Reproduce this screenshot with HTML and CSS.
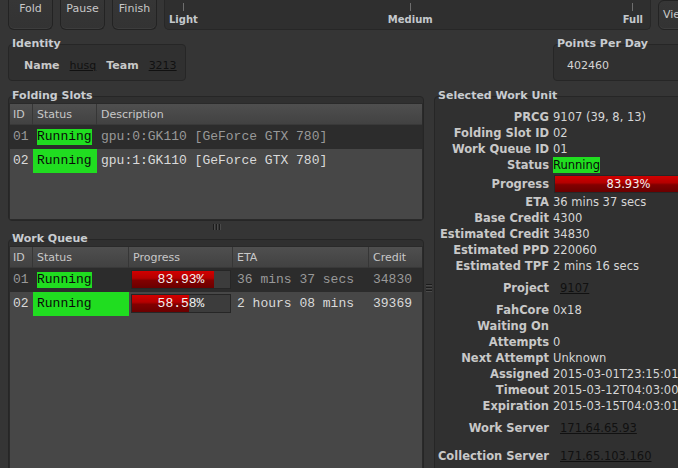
FILE: index.html
```html
<!DOCTYPE html>
<html>
<head>
<meta charset="utf-8">
<title>FAHControl</title>
<link rel="stylesheet" href="styles.css">
</head>
<body>
<div class="app">
  <div class="toolbar">
    <div class="btn">Fold</div>
    <div class="btn">Pause</div>
    <div class="btn">Finish</div>
    <div class="slider">
      <div class="stop"><span class="tick"></span><span class="stop-label">Light</span></div>
      <div class="stop"><span class="tick"></span><span class="stop-label">Medium</span></div>
      <div class="stop"><span class="tick"></span><span class="stop-label">Full</span></div>
    </div>
    <div class="btn view">View</div>
  </div>

  <div class="info-row">
    <div class="group">
      <div class="group-title">Identity</div>
      <div class="group-box identity">
        <span class="key">Name</span><a class="link">husq</a><span class="key">Team</span><a class="link">3213</a>
      </div>
    </div>
    <div class="group ppd">
      <div class="group-title">Points Per Day</div>
      <div class="group-box ppd-box">402460</div>
    </div>
  </div>

  <div class="main">
    <div class="left">
      <div class="group slots">
        <div class="group-title">Folding Slots</div>
        <div class="group-box table-box">
          <div class="table">
            <div class="trow head slots-cols">
              <div class="th id">ID</div><div class="th">Status</div><div class="th">Description</div>
            </div>
            <div class="trow dim slots-cols">
              <div class="td id">01</div><div class="td"><span class="run">Running</span></div><div class="td">gpu:0:GK110 [GeForce GTX 780]</div>
            </div>
            <div class="trow slots-cols">
              <div class="td id">02</div><div class="td run-fill">Running</div><div class="td">gpu:1:GK110 [GeForce GTX 780]</div>
            </div>
          </div>
        </div>
      </div>

      <div class="hsplit"><span></span><span></span><span></span></div>

      <div class="group queue">
        <div class="group-title">Work Queue</div>
        <div class="group-box table-box">
          <div class="table">
            <div class="trow head queue-cols">
              <div class="th id">ID</div><div class="th">Status</div><div class="th">Progress</div><div class="th">ETA</div><div class="th">Credit</div>
            </div>
            <div class="trow dim queue-cols">
              <div class="td id">01</div>
              <div class="td"><span class="run">Running</span></div>
              <div class="td bar-cell"><div class="bar mono-bar" style="--p: 83.93%">83.93%</div></div>
              <div class="td">36 mins 37 secs</div>
              <div class="td">34830</div>
            </div>
            <div class="trow queue-cols">
              <div class="td id">02</div>
              <div class="td run-fill">Running</div>
              <div class="td bar-cell"><div class="bar mono-bar" style="--p: 58.58%">58.58%</div></div>
              <div class="td">2 hours 08 mins</div>
              <div class="td">39369</div>
            </div>
          </div>
        </div>
      </div>
    </div>

    <div class="vsplit"><span></span><span></span><span></span></div>

    <div class="right">
      <div class="group wu">
        <div class="group-title">Selected Work Unit</div>
        <div class="group-box wu-box">
          <div class="kv"><span class="k">PRCG</span><span class="v">9107 (39, 8, 13)</span></div>
          <div class="kv"><span class="k">Folding Slot ID</span><span class="v">02</span></div>
          <div class="kv"><span class="k">Work Queue ID</span><span class="v">01</span></div>
          <div class="kv"><span class="k">Status</span><span class="v"><span class="run-sans">Running</span></span></div>
          <div class="kv prog"><span class="k">Progress</span><span class="v"><span class="bar sans-bar" style="--p: 83.93%">83.93%</span></span></div>
          <div class="kv"><span class="k">ETA</span><span class="v">36 mins 37 secs</span></div>
          <div class="kv"><span class="k">Base Credit</span><span class="v">4300</span></div>
          <div class="kv"><span class="k">Estimated Credit</span><span class="v">34830</span></div>
          <div class="kv"><span class="k">Estimated PPD</span><span class="v">220060</span></div>
          <div class="kv"><span class="k">Estimated TPF</span><span class="v">2 mins 16 secs</span></div>
          <div class="kv tall"><span class="k">Project</span><span class="v"><a class="link pad">9107</a></span></div>
          <div class="kv"><span class="k">FahCore</span><span class="v">0x18</span></div>
          <div class="kv"><span class="k">Waiting On</span><span class="v"></span></div>
          <div class="kv"><span class="k">Attempts</span><span class="v">0</span></div>
          <div class="kv"><span class="k">Next Attempt</span><span class="v">Unknown</span></div>
          <div class="kv"><span class="k">Assigned</span><span class="v">2015-03-01T23:15:01Z</span></div>
          <div class="kv"><span class="k">Timeout</span><span class="v">2015-03-12T04:03:00Z</span></div>
          <div class="kv"><span class="k">Expiration</span><span class="v">2015-03-15T04:03:01Z</span></div>
          <div class="kv tall"><span class="k">Work Server</span><span class="v"><a class="link pad">171.64.65.93</a></span></div>
          <div class="kv tall"><span class="k">Collection Server</span><span class="v"><a class="link pad">171.65.103.160</a></span></div>
        </div>
      </div>
    </div>
  </div>
</div>
</body>
</html>
```

FILE: styles.css
```css
html, body {
  margin: 0;
  padding: 0;
}

body {
  background: #353535;
  width: 678px;
  height: 468px;
  overflow: hidden;
  font-family: "DejaVu Sans", "Noto Sans", sans-serif;
  font-size: 11px;
  color: #c8c8c8;
}

.app {
  width: 714px;
}

/* ---------- toolbar ---------- */
.toolbar {
  display: flex;
  align-items: flex-start;
  gap: 7px;
  height: 30px;
  padding-left: 8px;
}

.btn {
  flex: none;
  width: 45px;
  height: 30px;
  box-sizing: border-box;
  border: 1px solid #232323;
  border-top: none;
  border-radius: 0 0 6px 6px;
  background: linear-gradient(#363636, #333333);
  box-shadow: inset 0 -1px 0 #3d3d3d;
  text-align: center;
  line-height: 16px;
  padding-top: 1px;
  color: #c8c8c8;
}

.btn.view {
  width: 52px;
  border-top: 1px solid #232323;
  border-radius: 6px;
  text-align: left;
  padding: 6px 0 0 4px;
}

.slider {
  flex: none;
  width: 487px;
  height: 30px;
  box-sizing: border-box;
  border: 1px solid #272727;
  border-top: none;
  border-radius: 0 0 5px 5px;
  background: #2f2f2f;
  display: flex;
  justify-content: space-between;
  padding: 0 7px 0 4px;
}

.stop {
  display: flex;
  flex-direction: column;
  align-items: center;
}

.tick {
  width: 1px;
  height: 8px;
  margin-top: 3px;
  background: #6e6e6e;
}

.stop-label {
  margin-top: 3px;
  font-size: 10px;
  font-weight: bold;
  line-height: 12px;
  color: #c4c8cc;
}

/* ---------- group boxes ---------- */
.group {
  display: flex;
  flex-direction: column;
}

.group-title {
  z-index: 1;
  font-weight: bold;
  line-height: 13px;
  height: 13px;
  padding-left: 4px;
  margin-bottom: -6px;
  white-space: nowrap;
  color: #c8ccd0;
}

.group-box {
  border: 1px solid #262626;
  border-radius: 4px;
  background: #303030;
}

.info-row {
  display: flex;
  justify-content: space-between;
  padding: 0 8px;
  margin-top: 7px;
}

.identity {
  display: flex;
  gap: 10px;
  line-height: 16px;
  padding: 13px 8px 6px 15px;
}

.key {
  font-weight: bold;
  color: #c8c8c8;
}

.link {
  color: #111111;
  text-decoration: underline;
}

.link.pad {
  padding-left: 7px;
}

.ppd {
  width: 153px;
}

.ppd-box {
  line-height: 16px;
  padding: 13px 0 6px 13px;
  color: #d4d4d4;
}

/* ---------- main area ---------- */
.main {
  display: flex;
  height: 396px;
  padding-left: 8px;
  margin-top: 8px;
}

.left {
  width: 416px;
  flex: none;
  display: flex;
  flex-direction: column;
}

.slots .table-box {
  height: 125px;
  box-sizing: border-box;
}

.queue {
  flex: 1;
}

.queue .table-box {
  flex: 1;
}

.table-box {
  display: flex;
  flex-direction: column;
  padding-top: 6px;
  border-radius: 4px;
}

.table {
  flex: 1;
  border: 1px solid #2a2a2a;
  background: #474747;
  overflow: hidden;
}

.trow {
  display: grid;
  height: 24px;
}

.slots-cols {
  grid-template-columns: 23px 64px 1fr;
}

.queue-cols {
  grid-template-columns: 23px 96px 104px 136px 1fr;
}

.trow.head {
  height: 21px;
  background: linear-gradient(#4f4f4f, #414141);
  box-shadow: inset 0 -1px 0 #393939;
}

.th {
  line-height: 21px;
  padding-left: 4px;
  border-right: 1px solid #363636;
  color: #c8c8c8;
  white-space: nowrap;
}

.th:last-child {
  border-right: none;
}

.td {
  font-family: "Liberation Mono", "DejaVu Sans Mono", monospace;
  font-size: 13px;
  line-height: 24px;
  padding-left: 4px;
  white-space: nowrap;
  overflow: hidden;
  color: #dadada;
}

.th.id,
.td.id {
  padding-left: 3px;
}

.trow.dim {
  background: #2c2c2c;
}

.trow.dim .td {
  color: #999999;
}

.run {
  display: inline-block;
  vertical-align: middle;
  line-height: 16px;
  background: #20dd20;
  color: #0a0a0a;
}

.trow.dim .td .run {
  color: #0a0a0a;
}

.td.run-fill {
  background: #20dd20;
  color: #0a0a0a;
}

.bar-cell {
  padding: 2px 0 0 2px;
}

.bar {
  display: block;
  box-sizing: border-box;
  border: 1px solid #262626;
  background: linear-gradient(#d20000 0%, #b40000 42%, #820000 55%, #6a0000 100%) no-repeat, #3c3c3c;
  background-size: var(--p) 100%, auto;
  text-align: center;
  color: #f2f2f2;
}

.mono-bar {
  width: 100px;
  height: 19px;
  line-height: 17px;
  font-size: 13px;
}

.sans-bar {
  height: 18px;
  line-height: 16px;
  margin-left: 1px;
  font-family: "DejaVu Sans", sans-serif;
  font-size: 11.5px;
}

/* ---------- splitters ---------- */
.hsplit {
  height: 11px;
  flex: none;
  display: flex;
  justify-content: center;
  align-items: center;
  gap: 2px;
}

.hsplit span {
  width: 1px;
  height: 6px;
  background: #1c1c1c;
  box-shadow: 1px 0 0 #4a4a4a;
}

.vsplit {
  width: 10px;
  flex: none;
  display: flex;
  flex-direction: column;
  justify-content: center;
  align-items: center;
  gap: 2px;
}

.vsplit span {
  width: 6px;
  height: 1px;
  background: #1c1c1c;
  box-shadow: 0 1px 0 #4a4a4a;
}

/* ---------- selected work unit ---------- */
.right {
  flex: 1;
  display: flex;
  flex-direction: column;
  padding-right: 8px;
}

.wu {
  flex: 1;
}

.wu-box {
  flex: 1;
  padding: 12px 2px 0 0;
  font-size: 11.5px;
}

.kv {
  display: flex;
  align-items: center;
  height: 16px;
  line-height: 16px;
  white-space: nowrap;
}

.kv.prog {
  height: 21px;
}

.kv.tall {
  height: 28px;
}

.k {
  flex: none;
  width: 114px;
  text-align: right;
  font-weight: bold;
  color: #c8c8c8;
}

.v {
  flex: 1;
  margin-left: 4px;
  color: #d6d6d6;
}

.run-sans {
  display: inline-block;
  line-height: 16px;
  background: #20dd20;
  color: #0a0a0a;
}
```
